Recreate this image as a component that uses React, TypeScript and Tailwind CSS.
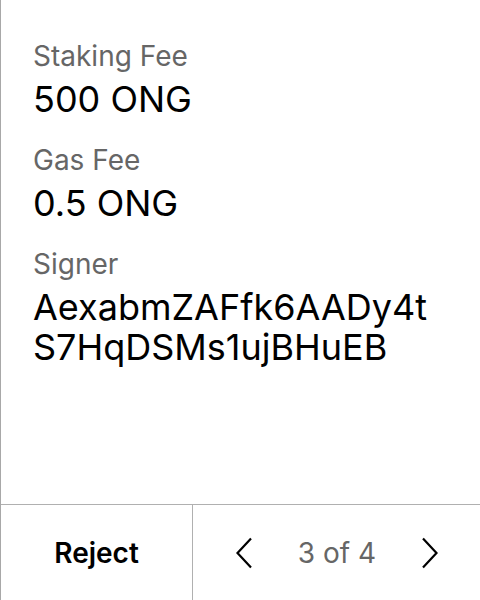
import React from 'react';

const fields = [
  { label: 'Staking Fee', value: '500 ONG' },
  { label: 'Gas Fee', value: '0.5 ONG' },
  { label: 'Signer', value: 'AexabmZAFfk6AADy4tS7HqDSMs1ujBHuEB' },
];

const Chevron: React.FC<{ dir: 'left' | 'right' }> = ({ dir }) => (
  <svg width="18" height="32" viewBox="0 0 18 32" fill="none" stroke="#000" strokeWidth="2.2">
    {dir === 'left' ? <path d="M16 1.5 2.5 16 16 30.5" /> : <path d="M2 1.5 15.5 16 2 30.5" />}
  </svg>
);

export default function App() {
  return (
    <div
      className="flex h-[600px] w-[480px] flex-col border-l border-[#a8a8a8] bg-white"
      style={{ fontFamily: 'Inter, "Noto Sans", sans-serif' }}
    >
      <div className="flex flex-1 flex-col gap-[24px] pl-[32px] pr-[33px] pt-[39px]">
        {fields.map((f) => (
          <div key={f.label}>
            <div className="text-[28px] leading-[34px] text-[#666]">{f.label}</div>
            <div className="mt-[6px] break-all text-[36px] leading-[40px] text-black">{f.value}</div>
          </div>
        ))}
      </div>
      {/* footer */}
      <div className="flex h-[96px] border-t border-[#b0b0b0]">
        <button className="flex w-[192px] items-center justify-center border-r border-[#b0b0b0] text-[28px] font-semibold text-black">
          Reject
        </button>
        <div className="flex flex-1 items-center justify-between pl-[42px] pr-[41px]">
          <Chevron dir="left" />
          <span className="text-[28px] text-[#666]">3 of 4</span>
          <Chevron dir="right" />
        </div>
      </div>
    </div>
  );
}
